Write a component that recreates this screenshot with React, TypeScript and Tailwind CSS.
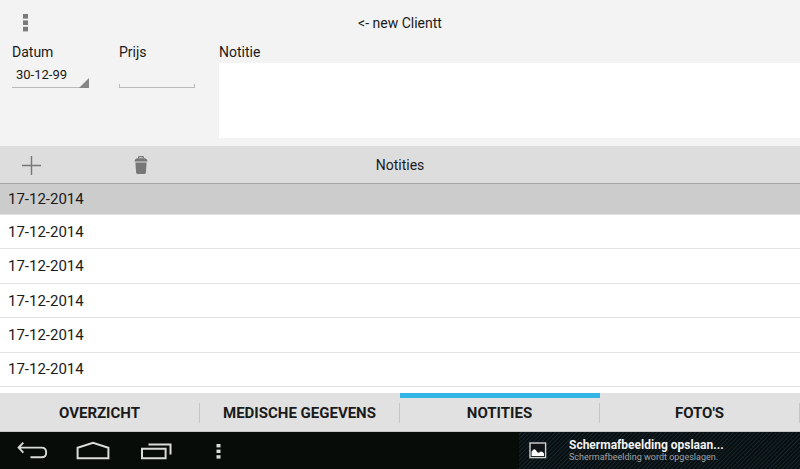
import React, { useState } from "react";
import clsx from "clsx";

interface Note {
  id: number;
  date: string;
  price: string;
  text: string;
}

const notes: Note[] = [1, 2, 3, 4, 5, 6].map((id) => ({
  id,
  date: "17-12-2014",
  price: "",
  text: "",
}));

const tabs = ["Overzicht", "Medische gegevens", "Notities", "Foto's"];

function OverflowIcon({ className }: { className?: string }) {
  return (
    <svg
      width="5"
      height="18"
      viewBox="0 0 5 18"
      fill="currentColor"
      className={className}
    >
      <rect width="5" height="4.6" y="0" />
      <rect width="5" height="4.6" y="6.4" />
      <rect width="5" height="4.6" y="12.8" />
    </svg>
  );
}

function NoteForm() {
  const [date, setDate] = useState("30-12-99");
  const [price, setPrice] = useState("");
  const [text, setText] = useState("");

  return (
    <form
      className="flex pl-3 pb-2 text-sm leading-5"
      onSubmit={(e) => e.preventDefault()}
    >
      <div className="w-[107px] shrink-0">
        <label htmlFor="date" className="block">
          Datum
        </label>
        <div className="relative w-[77px]">
          <select
            id="date"
            value={date}
            onChange={(e) => setDate(e.target.value)}
            className="block h-[26px] w-full appearance-none border-b border-[#bababa] pl-1 text-[13px] leading-5 outline-none"
          >
            <option>30-12-99</option>
          </select>
          <svg
            width="10"
            height="10"
            viewBox="0 0 10 10"
            className="pointer-events-none absolute right-0 bottom-0 text-[#858585]"
          >
            <path d="M10 0v10H0z" fill="currentColor" />
          </svg>
        </div>
      </div>
      <div className="w-[100px] shrink-0">
        <label htmlFor="price" className="block">
          Prijs
        </label>
        <div className="relative w-[76px]">
          <input
            id="price"
            value={price}
            onChange={(e) => setPrice(e.target.value)}
            className="block h-[26px] w-full px-1 outline-none"
          />
          <span className="pointer-events-none absolute inset-x-0 bottom-0 h-1 border-x border-b border-[#bababa]" />
        </div>
      </div>
      <div className="flex-1">
        <label htmlFor="note" className="block">
          Notitie
        </label>
        <textarea
          id="note"
          value={text}
          onChange={(e) => setText(e.target.value)}
          className="mt-px block h-[75px] w-full resize-none bg-white p-2 outline-none"
        />
      </div>
    </form>
  );
}

function Toolbar() {
  return (
    <div className="grid h-[38px] shrink-0 grid-cols-[1fr_auto_1fr] items-center border-b border-[#a5a5a5] bg-[#dddddd]">
      <div className="flex items-center text-[#777777]">
        <button type="button" aria-label="Toevoegen" className="pl-[22px]">
          <svg width="19" height="20" viewBox="0 0 19 20" className="block">
            <path
              d="M9.5 1v19M0 10.5h19"
              stroke="currentColor"
              strokeWidth="1.4"
            />
          </svg>
        </button>
        <button type="button" aria-label="Verwijderen" className="pl-[93px]">
          <svg
            width="14"
            height="18"
            viewBox="0 0 14 18"
            fill="currentColor"
            className="block"
          >
            <path
              d="M4.6 2.6V1.4Q4.6.6 5.4.6h3.2q.8 0 .8.8v1.2"
              fill="none"
              stroke="currentColor"
              strokeWidth="1.2"
            />
            <path d="M2.8 2.2h8.4q2.2.8 2.4 3.4H.4q.2-2.6 2.4-3.4z" />
            <path d="M1.4 6.6h11.2l-.7 10q-.1 1.3-1.4 1.3H3.5q-1.3 0-1.4-1.3z" />
          </svg>
        </button>
      </div>
      <h2 className="text-sm leading-5">Notities</h2>
    </div>
  );
}

interface NoteListProps {
  selectedId: number;
  onSelect: (id: number) => void;
}

function NoteList({ selectedId, onSelect }: NoteListProps) {
  return (
    <ul className="flex min-h-0 flex-1 flex-col bg-white pb-1.5">
      {notes.map((note) => (
        <li
          key={note.id}
          className="flex-1 border-b border-[#e2e2e2] first:h-[31px] first:flex-none"
        >
          <button
            type="button"
            onClick={() => onSelect(note.id)}
            className={clsx(
              "flex h-full w-full items-center px-2 text-left text-[15px] leading-5",
              note.id === selectedId && "bg-[#cccccc]"
            )}
          >
            {note.date}
          </button>
        </li>
      ))}
    </ul>
  );
}

function TabBar() {
  const [active, setActive] = useState("Notities");

  return (
    <nav className="flex h-[39px] shrink-0 border-b border-[#c4c4c4] bg-[#e1e1e1]">
      {tabs.map((tab) => (
        <button
          key={tab}
          type="button"
          onClick={() => setActive(tab)}
          className={clsx(
            "flex flex-1 basis-0 items-center border-t-[5px] pb-1",
            tab === active ? "border-[#33b5e5]" : "border-transparent"
          )}
        >
          <span className="flex-1 text-[15px] leading-5 font-bold whitespace-nowrap uppercase">
            {tab}
          </span>
          <span className="h-5 w-px bg-[#c6c6c6]" />
        </button>
      ))}
    </nav>
  );
}

function SystemBar() {
  return (
    <footer className="flex h-[37px] shrink-0 items-stretch bg-[#080c09] text-[#d9dcd9]">
      <div className="flex flex-1 items-center pl-4">
        <button type="button" aria-label="Terug" className="w-[60px]">
          <svg
            width="32"
            height="20"
            viewBox="0 0 32 20"
            fill="none"
            stroke="currentColor"
            strokeWidth="1.9"
            className="block"
          >
            <path d="M7.3 1.6 2.6 6.6l4.7 5M2.6 6.6h23q4.6 0 4.6 4.8t-4.6 4.8H14.5" />
          </svg>
        </button>
        <button type="button" aria-label="Startscherm" className="w-16">
          <svg
            width="34"
            height="20"
            viewBox="0 0 34 20"
            fill="none"
            stroke="currentColor"
            strokeWidth="2"
            className="block"
          >
            <path d="M1.6 17.2V6.8L17 1.8l15.4 5v10.4z" />
          </svg>
        </button>
        <button type="button" aria-label="Recente apps" className="w-[76px]">
          <svg
            width="32"
            height="20"
            viewBox="0 0 32 20"
            fill="none"
            stroke="currentColor"
            strokeWidth="2"
            className="block"
          >
            <path d="M2 7.8h23.6v9.4H2zM8.5 3.4h22v10.2" />
          </svg>
        </button>
        <button type="button" aria-label="Menu">
          <svg
            width="5"
            height="16"
            viewBox="0 0 5 16"
            fill="currentColor"
            className="block"
          >
            <rect x=".5" y="1" width="4" height="3.4" />
            <rect x=".5" y="6.6" width="4" height="3.4" />
            <rect x=".5" y="12.2" width="4" height="3.4" />
          </svg>
        </button>
      </div>
      <div className="flex w-[281px] items-center bg-[repeating-linear-gradient(135deg,#080d0f_0px,#080d0f_1px,#16272d_2px,#080d0f_3px)] pl-[10px]">
        <svg width="18" height="18" viewBox="0 0 18 18" className="shrink-0">
          <rect
            x="1"
            y="1"
            width="15.6"
            height="14.6"
            fill="#101416"
            stroke="#cfd2d2"
            strokeWidth="1.4"
          />
          <path
            d="M2.6 14V9.6l1-1 1.5-1.6L7 8.2l1.2 2 1.7.5 1.7-1.3 1.7.4 1.7 1.6V14z"
            fill="#fff"
          />
        </svg>
        <div className="pl-[22px]">
          <p className="text-[12px] leading-[14px] font-bold text-[#f2f2f2]">
            Schermafbeelding opslaan...
          </p>
          <p className="text-[9px] leading-[11px] text-[#a0a3a5]">
            Schermafbeelding wordt opgeslagen.
          </p>
        </div>
      </div>
    </footer>
  );
}

export default function App() {
  const [selectedId, setSelectedId] = useState(notes[0].id);

  return (
    <div className="flex h-screen flex-col overflow-hidden bg-[#f3f3f3] font-[Roboto,sans-serif] text-[#1a1a1a]">
      <header className="grid h-[42px] shrink-0 grid-cols-[1fr_auto_1fr] items-center pt-1">
        <button
          type="button"
          aria-label="Opties"
          className="justify-self-start pl-[23px] text-[#7b7b7b]"
        >
          <OverflowIcon className="block" />
        </button>
        <a href="#clients" className="text-sm leading-5">
          {"<- new Clientt"}
        </a>
      </header>
      <NoteForm />
      <Toolbar />
      <NoteList selectedId={selectedId} onSelect={setSelectedId} />
      <TabBar />
      <SystemBar />
    </div>
  );
}
